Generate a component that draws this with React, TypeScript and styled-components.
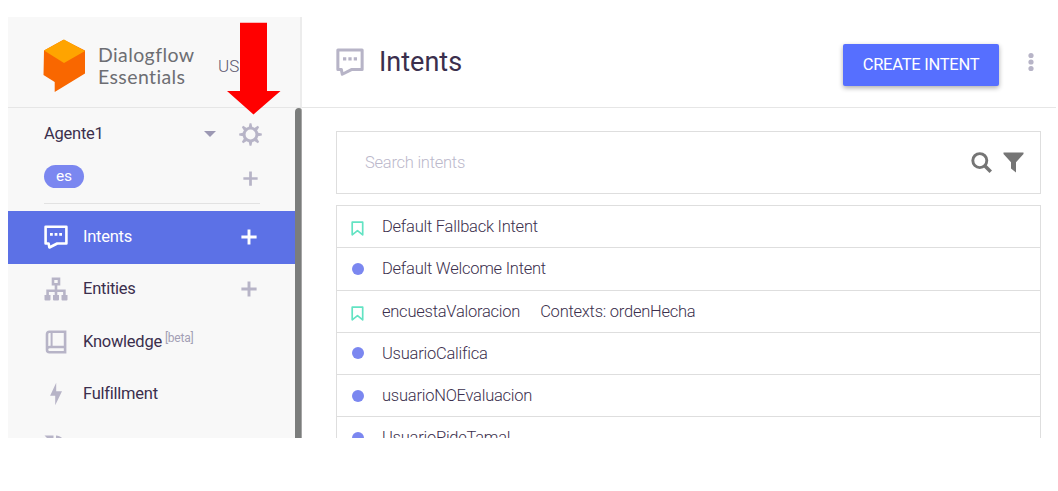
import React from 'react';
import styled, { createGlobalStyle } from 'styled-components';

const GlobalStyle = createGlobalStyle`
  *, *::before, *::after { box-sizing: border-box; }
  body { margin: 0; background: #fff; font-family: Roboto, "Liberation Sans", sans-serif; color: #3b2f4d; }
  svg { display: block; flex: none; }
`;

const Page = styled.div`
  position: relative;
  width: 1058px;
  height: 491px;
  padding: 17px 2px 0 8px;
  overflow: hidden;
`;

const Window = styled.div`
  display: grid;
  grid-template-columns: 294px 1fr;
  grid-template-rows: 91px 330px;
  height: 421px;
  overflow: hidden;
`;

const Brand = styled.header`
  display: flex;
  background: #f8f8f8;
  border-right: 2px solid #ececec;
  border-bottom: 1px solid #e6e6e6;
  padding: 22px 0 0 35px;
`;

const BrandName = styled.div`
  margin: 5px 0 0 13px;
  width: 120px;
  font: 400 19.5px/22px Lato, sans-serif;
  letter-spacing: 0.4px;
  color: #6d6e73;
`;

const Region = styled.span`
  margin-top: 17px;
  font-size: 17px;
  line-height: 20px;
  font-weight: 300;
  color: #5d5870;
`;

const TopBar = styled.header`
  display: flex;
  align-items: flex-start;
  border-bottom: 1px solid #e6e6e6;
  padding: 27px 22px 0 34px;
`;

const Title = styled.h1`
  flex: 1;
  margin: 2px 0 0 15px;
  font-size: 27px;
  line-height: 32px;
  font-weight: 400;
  letter-spacing: 0;
`;

const CreateButton = styled.button`
  width: 156px;
  height: 41.5px;
  margin-right: 1px;
  border: 0;
  border-radius: 2px;
  padding: 0;
  background: #566fff;
  color: #fff;
  font: 400 16.5px/20px Roboto, sans-serif;
  letter-spacing: -0.25px;
  box-shadow: 0 2px 5px rgba(0, 0, 0, 0.32);
`;

const MoreIcon = styled.svg`
  margin: 8px 0 0 28px;
`;

const Sidebar = styled.aside`
  display: flex;
  background: #f8f8f8;
`;

const SideContent = styled.div`
  flex: 1;
  min-width: 0;
`;

const ScrollThumb = styled.div`
  width: 7px;
  height: 340px;
  border-right: 1px solid #a5a5a5;
  background: #7b7d7c;
  border-radius: 4px 3px 0 0;
`;

const AgentPanel = styled.div`
  height: 96px;
  margin: 0 35px 0 36px;
  border-bottom: 1px solid #e2e2e2;
`;

const AgentRow = styled.div<{ $height: number }>`
  display: flex;
  align-items: center;
  height: ${({ $height }) => $height}px;
`;

const AgentName = styled.span`
  flex: 1;
  font-size: 16.5px;
  letter-spacing: -0.25px;
  line-height: 20px;
`;

const LanguagePill = styled.span`
  width: 40px;
  height: 23px;
  margin-top: -4px;
  margin-right: auto;
  border-radius: 12px;
  background: #7b87f0;
  color: #fff;
  font-size: 15.5px;
  line-height: 23px;
  text-align: center;
`;

const Nav = styled.nav`
  padding-top: 7px;
`;

const NavItem = styled.a<{ $active?: boolean }>`
  display: flex;
  align-items: center;
  height: 52.5px;
  padding: 0 38px 1px 36px;
  background: ${({ $active }) => ($active ? '#5c71e6' : 'transparent')};
  color: ${({ $active }) => ($active ? '#fff' : '#b7b4c7')};
`;

const NavLabel = styled.span<{ $active?: boolean }>`
  flex: 1;
  margin-left: 15px;
  font-size: 16.5px;
  letter-spacing: -0.25px;
  line-height: 20px;
  color: ${({ $active }) => ($active ? '#fff' : '#3b2f4d')};
`;

const Beta = styled.sup`
  margin-left: 3px;
  font-size: 12px;
  line-height: 0;
  color: #a39fb5;
  vertical-align: 5px;
`;

const Main = styled.main`
  padding: 23px 15px 0 34px;
`;

const SearchBox = styled.div`
  display: flex;
  align-items: center;
  height: 63px;
  padding: 0 16px 0 28px;
  border: 1px solid #dedede;
  margin-bottom: 11px;
`;

const Placeholder = styled.span`
  flex: 1;
  font-size: 16.5px;
  letter-spacing: -0.25px;
  font-weight: 300;
  color: #bbb8cb;
`;

const FilterIcon = styled.svg`
  margin-left: 11px;
`;

const IntentList = styled.ul`
  margin: 0;
  padding: 0;
  list-style: none;
  border: 1px solid #dedede;
`;

const IntentRow = styled.li`
  display: flex;
  align-items: center;
  height: 42.25px;
  padding-left: 14px;
  border-bottom: 1px solid #dedede;
  font-size: 16.5px;
  letter-spacing: -0.24px;
  font-weight: 300;
`;

const IntentName = styled.span`
  margin-left: 18px;
`;

const Contexts = styled.span`
  margin-left: 20px;
`;

const Dot = styled.i`
  width: 12px;
  height: 12px;
  margin-left: 1px;
  border-radius: 50%;
  background: #7b87f0;
`;

const Flag = styled.svg`
  margin: 4px 0 0;
`;

const PointerArrow = styled.svg`
  position: absolute;
  left: 227px;
  top: 22px;
`;

const LogoMark = () => (
  <svg width="42" height="54" viewBox="0 0 42 54">
    <path d="M1 11.5 20.5 0.7 42 11.5V34.5L11.7 53V43L.5 36Z" fill="#f96700" />
    <path d="M1 11.5 21 .5 42 12 21 24Z" fill="#ffa400" />
  </svg>
);

const ChatIcon = ({ size }: { size: number }) => (
  <svg width={size} height={size} viewBox="0 0 24 24" fill="none" stroke="currentColor">
    <path d="M1.6 1.7H22.4V18.5H13.2L5.4 22.5 4.6 18.5H1.6Z" strokeWidth="2.6" strokeLinejoin="round" />
    <path d="M6 9.3h2.8M10.6 9.3h2.8M15.2 9.3h2.8" strokeWidth="2.7" />
  </svg>
);

const PlusIcon = ({ size }: { size: number }) => (
  <svg width={size} height={size} viewBox="0 0 16 16" stroke="currentColor" strokeWidth="2.9">
    <path d="M8 .4v15.2M.4 8h15.2" />
  </svg>
);

const EntitiesIcon = () => (
  <svg width="24" height="24" viewBox="0 0 24 24" fill="none" stroke="currentColor" strokeWidth="2.6">
    <path d="M9 1.8h6v5.4H9zM12 8v11M3.6 19v-5.3h16.8V19" />
    <path fill="currentColor" stroke="none" d="M.5 18h6v4.5a1 1 0 0 1-1 1h-4a1 1 0 0 1-1-1zM9 18h6v4.5a1 1 0 0 1-1 1h-4a1 1 0 0 1-1-1zM17.5 18h6v4.5a1 1 0 0 1-1 1h-4a1 1 0 0 1-1-1z" />
  </svg>
);

const BookIcon = () => (
  <svg width="24" height="24" viewBox="0 0 24 24" fill="none" stroke="currentColor">
    <path d="M21.1 1.8H5.4Q3 1.8 3 4.2V19.8Q3 22.3 5.4 22.3H21.1ZM3 19Q3.3 17 6 17H21" strokeWidth="2.6" />
    <path d="M7.6 2v15" strokeWidth="2" />
  </svg>
);

const BoltIcon = () => (
  <svg width="24" height="24" viewBox="0 0 24 24" fill="currentColor">
    <path d="M12.2.8 6.1 13.7h5.1v9.6L18 9.3h-5.8Z" />
  </svg>
);

const IntegrationsIcon = () => (
  <svg width="24" height="24" viewBox="0 0 24 24" fill="currentColor">
    <path d="M.5.5H9.5V9.5ZM12 .5C16 .5 19 3 20.5 7L18 9.5C17 6 15 4 12 4Z" />
  </svg>
);

const GearIcon = () => (
  <svg width="23" height="23" viewBox="0 0 23 23" fill="none" stroke="#b7b4c7">
    <circle cx="11.5" cy="11.5" r="6.4" strokeWidth="2.9" />
    {[0, 45, 90, 135, 180, 225, 270, 315].map((a) => (
      <path key={a} d="M9.4 5.2 10.6.2h1.8L13.6 5.2Z" fill="#b7b4c7" stroke="none" transform={`rotate(${a} 11.5 11.5)`} />
    ))}
  </svg>
);

const BookmarkIcon = () => (
  <Flag width="13" height="15" viewBox="0 0 13 15" fill="none" stroke="#63e3c3" strokeWidth="1.7">
    <path d="M1.2 1.2h10.5v12.6L6.5 9.6 1.2 13.8Z" strokeLinejoin="round" />
  </Flag>
);

const navItems = [
  { label: 'Intents', icon: <ChatIcon size={24} />, active: true, plus: true },
  { label: 'Entities', icon: <EntitiesIcon />, plus: true },
  { label: 'Knowledge', icon: <BookIcon />, beta: true },
  { label: 'Fulfillment', icon: <BoltIcon /> },
  { label: '', icon: <IntegrationsIcon /> },
];

const intents = [
  { name: 'Default Fallback Intent', flagged: true },
  { name: 'Default Welcome Intent' },
  { name: 'encuestaValoracion', contexts: 'Contexts: ordenHecha', flagged: true },
  { name: 'UsuarioCalifica' },
  { name: 'usuarioNOEvaluacion' },
  { name: 'UsuarioPideTamal' },
];

const HeaderIcon = styled.div`
  margin-top: 4px;
  color: #b7b4c7;
`;

const AgentActions = styled.div`
  display: flex;
  align-items: center;
  gap: 23px;
  margin-right: -2px;
`;

const AddLanguage = styled.div`
  margin-right: 2px;
  color: #b7b4c7;
`;

export default function App() {
  return (
    <Page>
      <GlobalStyle />
      <Window>
        <Brand>
          <LogoMark />
          <BrandName>Dialogflow<br />Essentials</BrandName>
          <Region>US</Region>
        </Brand>
        <TopBar>
          <HeaderIcon><ChatIcon size={28} /></HeaderIcon>
          <Title>Intents</Title>
          <CreateButton>CREATE INTENT</CreateButton>
          <MoreIcon width="6" height="20" viewBox="0 0 6 20" fill="#b7b4c7">
            <circle cx="3" cy="3.5" r="2.6" />
            <circle cx="3" cy="10" r="2.6" />
            <circle cx="3" cy="16.5" r="2.6" />
          </MoreIcon>
        </TopBar>
        <Sidebar>
          <SideContent>
            <AgentPanel>
              <AgentRow $height={52}>
                <AgentName>Agente1</AgentName>
                <AgentActions>
                  <svg width="12" height="6" viewBox="0 0 12 6"><path d="M0 0h12L6 6Z" fill="#9c98b3" /></svg>
                  <GearIcon />
                </AgentActions>
              </AgentRow>
              <AgentRow $height={36}>
                <LanguagePill>es</LanguagePill>
                <AddLanguage><PlusIcon size={15} /></AddLanguage>
              </AgentRow>
            </AgentPanel>
            <Nav>
              {navItems.map((item, i) => (
                <NavItem key={i} $active={item.active}>
                  {item.icon}
                  <NavLabel $active={item.active}>{item.label}{item.beta && <Beta>[beta]</Beta>}</NavLabel>
                  {item.plus && <PlusIcon size={16} />}
                </NavItem>
              ))}
            </Nav>
          </SideContent>
          <ScrollThumb />
        </Sidebar>
        <Main>
          <SearchBox>
            <Placeholder>Search intents</Placeholder>
            <svg width="22" height="22" viewBox="0 0 22 22" fill="none" stroke="#757575">
              <circle cx="9.8" cy="8.6" r="7" strokeWidth="2.9" />
              <path d="m15 14 5.8 5.8" strokeWidth="3.6" />
            </svg>
            <FilterIcon width="21" height="21" viewBox="0 0 21 21" fill="#757575">
              <path d="M.5.5h20V2L13 10.3V20.5L8 16.5V10.3L.5 2Z" />
            </FilterIcon>
          </SearchBox>
          <IntentList>
            {intents.map((intent) => (
              <IntentRow key={intent.name}>
                {intent.flagged ? <BookmarkIcon /> : <Dot />}
                <IntentName>{intent.name}</IntentName>
                {intent.contexts && <Contexts>{intent.contexts}</Contexts>}
              </IntentRow>
            ))}
          </IntentList>
        </Main>
      </Window>
      <PointerArrow width="54" height="93" viewBox="0 0 54 93">
        <path d="M13 .8h27V69H53.5L26.5 92.5 0 69H13Z" fill="#f00" />
      </PointerArrow>
    </Page>
  );
}
